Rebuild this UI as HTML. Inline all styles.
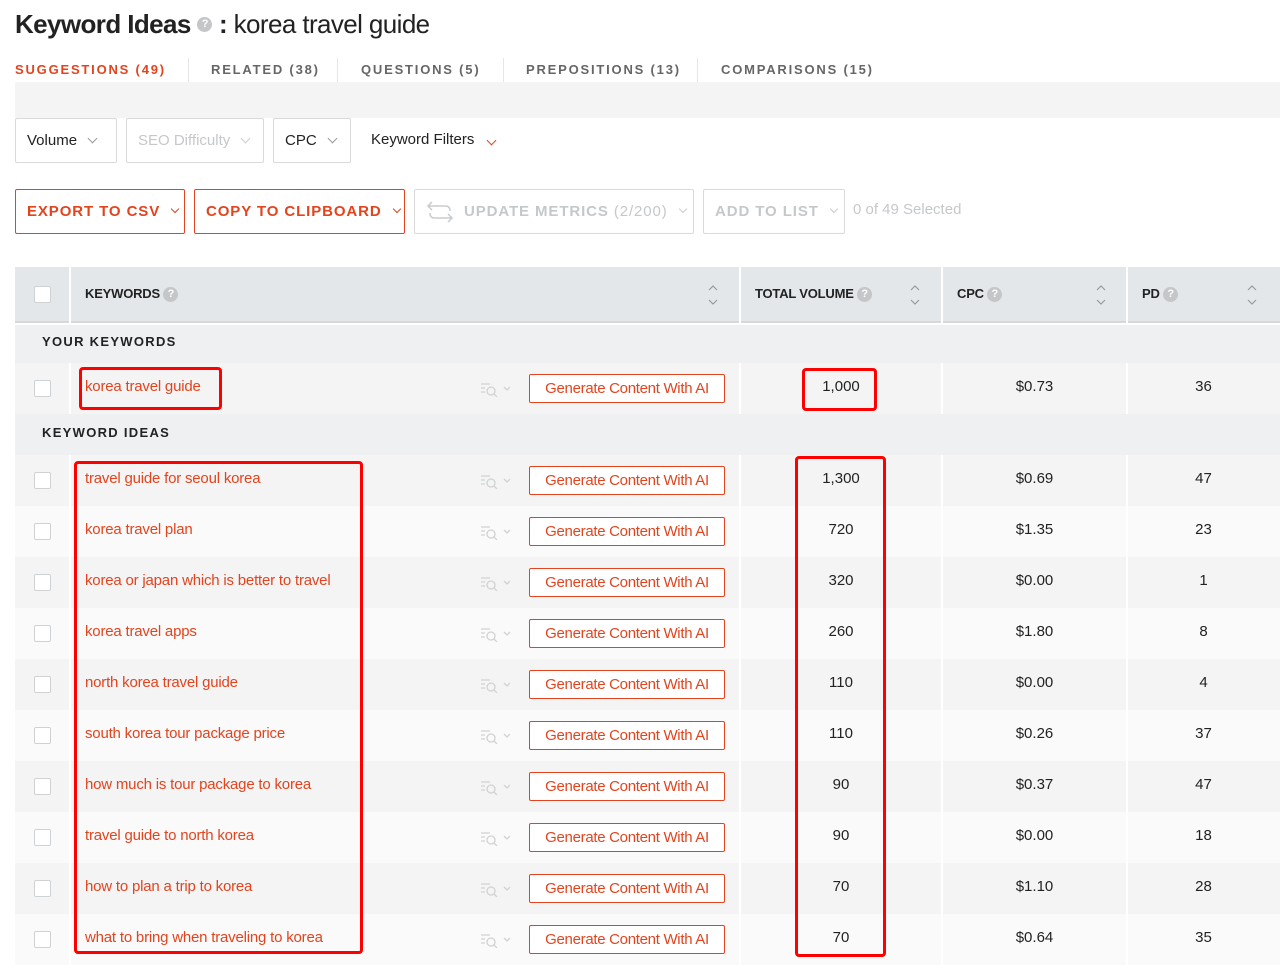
<!DOCTYPE html>
<html><head><meta charset="utf-8"><style>
*{box-sizing:border-box;margin:0;padding:0}
body{width:1280px;height:970px;background:#fff;font-family:"Liberation Sans",sans-serif;color:#222;position:relative;overflow:hidden}
.a{position:absolute}
h1{position:absolute;left:15px;top:9px;font-size:26px;font-weight:normal;letter-spacing:-0.6px}
h1 b{font-weight:bold}
.q{display:inline-block;width:15px;height:15px;border-radius:50%;background:#c4c6c8;color:#fff;font-size:11px;text-align:center;line-height:15px;vertical-align:middle;font-weight:bold}
.tab{position:absolute;top:62px;font-size:13px;font-weight:bold;letter-spacing:1.8px;color:#666;white-space:nowrap}
.sep{position:absolute;top:58px;width:1px;height:24px;background:#e6e6e6}
.box{position:absolute;border:1px solid #d8dadc;border-radius:2px;font-size:15px;display:flex;align-items:center;padding-left:11px;white-space:nowrap}
.chev{display:inline-block;width:7px;height:7px;border-right:1px solid #999;border-bottom:1px solid #999;transform:rotate(45deg);margin-left:12px;margin-top:-5px}
.btn{position:absolute;top:189px;height:45px;border-radius:2px;font-size:15px;font-weight:bold;letter-spacing:0.9px;display:flex;align-items:center;padding-left:11px;white-space:nowrap;overflow:hidden}
.o{border:1px solid #e2441e;color:#e2441e}
.g{border:1px solid #d8dadc;color:#c5c8cb}
.row{position:absolute;left:15px;width:1265px;height:51px}
.cb{position:absolute;left:19px;width:17px;height:17px;border:1px solid #cfd2d4;background:#fff;border-radius:2px}
.kw{position:absolute;left:70px;font-size:15px;color:#e2441e;letter-spacing:-0.2px}
.gen{position:absolute;left:514px;width:196px;height:29px;border:1px solid #e2441e;border-radius:2px;color:#e2441e;font-size:15px;text-align:center;line-height:27px;background:#fff;letter-spacing:-0.3px;white-space:nowrap}
.num{position:absolute;font-size:15px;text-align:center}
.ic{position:absolute;left:465px;width:34px;height:16px}
.vl{position:absolute;top:267px;width:2px;height:698px;background:#fff}
.red{position:absolute;border:3px solid #f00;border-radius:4px}
.th{position:absolute;top:286px;font-size:13px;font-weight:bold;letter-spacing:-0.2px}
.sort{position:absolute;top:283px;width:10px;height:24px}
.sec{position:absolute;left:15px;width:1265px;background:#eff0f1;z-index:2}
</style></head><body>
<h1><b>Keyword Ideas</b> <span class="q" style="margin-top:-4px">?</span> <b>:</b> korea travel guide</h1>

<div class="tab" style="left:15px;color:#e2441e">SUGGESTIONS (49)</div>
<div class="sep" style="left:188px"></div>
<div class="tab" style="left:211px">RELATED (38)</div>
<div class="sep" style="left:337px"></div>
<div class="tab" style="left:361px">QUESTIONS (5)</div>
<div class="sep" style="left:503px"></div>
<div class="tab" style="left:526px">PREPOSITIONS (13)</div>
<div class="sep" style="left:697px"></div>
<div class="tab" style="left:721px">COMPARISONS (15)</div>
<div class="a" style="left:15px;top:82px;width:1265px;height:36px;background:#f4f4f5"></div>

<div class="box" style="left:15px;top:118px;width:102px;height:45px">Volume<span class="chev"></span></div>
<div class="box" style="left:126px;top:118px;width:138px;height:45px;color:#c5c8cb">SEO Difficulty<span class="chev" style="border-color:#ccc"></span></div>
<div class="box" style="left:273px;top:118px;width:78px;height:45px">CPC<span class="chev"></span></div>
<div class="a" style="left:371px;top:131px;font-size:15px">Keyword Filters<span class="chev" style="border-color:#e2441e;margin-left:14px"></span></div>

<div class="btn o" style="left:15px;width:170px">EXPORT TO CSV<span class="chev" style="border-color:#e2441e;width:6px;height:6px"></span></div>
<div class="btn o" style="left:194px;width:211px">COPY TO CLIPBOARD<span class="chev" style="border-color:#e2441e;width:6px;height:6px"></span></div>
<div class="btn g" style="left:414px;width:280px"><svg width="28" height="26" viewBox="0 0 28 26" style="margin-right:10px;flex:none" fill="none" stroke="#c8cbce" stroke-width="1.5"><path d="M6 3L2 7l4 4M2 7h18a4 4 0 0 1 4 4v1M22 23l4-4-4-4M26 19H8a4 4 0 0 1-4-4v-1"/></svg>UPDATE METRICS<span style="font-weight:normal;margin-left:5px">(2/200)</span><span class="chev" style="border-color:#ccc;width:6px;height:6px"></span></div>
<div class="btn g" style="left:703px;width:142px">ADD TO LIST<span class="chev" style="border-color:#ccc;width:6px;height:6px"></span></div>
<div class="a" style="left:853px;top:201px;font-size:15px;color:#c5c8cb">0 of 49 Selected</div>

<div class="a" style="left:15px;top:267px;width:1265px;height:56px;background:#e4e7e9;border-bottom:2px solid #d6d9dc"></div>
<div class="cb" style="left:34px;top:286px"></div>
<div class="th" style="left:85px">KEYWORDS <span class="q">?</span></div>
<div class="th" style="left:755px">TOTAL VOLUME <span class="q">?</span></div>
<div class="th" style="left:957px">CPC <span class="q">?</span></div>
<div class="th" style="left:1142px">PD <span class="q">?</span></div>
<svg class="sort" style="left:708px" viewBox="0 0 10 24" fill="none" stroke="#999" stroke-width="1.2"><path d="M1 7l4-4 4 4M1 17l4 4 4-4"/></svg>
<svg class="sort" style="left:910px" viewBox="0 0 10 24" fill="none" stroke="#999" stroke-width="1.2"><path d="M1 7l4-4 4 4M1 17l4 4 4-4"/></svg>
<svg class="sort" style="left:1096px" viewBox="0 0 10 24" fill="none" stroke="#999" stroke-width="1.2"><path d="M1 7l4-4 4 4M1 17l4 4 4-4"/></svg>
<svg class="sort" style="left:1247px" viewBox="0 0 10 24" fill="none" stroke="#999" stroke-width="1.2"><path d="M1 7l4-4 4 4M1 17l4 4 4-4"/></svg>

<div id="rows"></div>
<script>
var d=[[363,"korea travel guide","1,000","$0.73","36"],
[455,"travel guide for seoul korea","1,300","$0.69","47"],
[506,"korea travel plan","720","$1.35","23"],
[557,"korea or japan which is better to travel","320","$0.00","1"],
[608,"korea travel apps","260","$1.80","8"],
[659,"north korea travel guide","110","$0.00","4"],
[710,"south korea tour package price","110","$0.26","37"],
[761,"how much is tour package to korea","90","$0.37","47"],
[812,"travel guide to north korea","90","$0.00","18"],
[863,"how to plan a trip to korea","70","$1.10","28"],
[914,"what to bring when traveling to korea","70","$0.64","35"]];
var h="";
d.forEach(function(r,i){
var bg=(i==0||i%2==1)?"#f4f4f5":"#fafafa";
h+='<div class="row" style="top:'+r[0]+'px;background:'+bg+'">'+
'<div class="cb" style="top:17px"></div>'+
'<div class="kw" style="top:15px">'+r[1]+'</div>'+
'<svg class="ic" style="top:18px" viewBox="0 0 34 16" fill="none" stroke="#cfd2d4" stroke-width="1.3"><path d="M1 3h9M1 7h4M1 11h4"/><circle cx="11" cy="10" r="4"/><path d="M14 13l3 3M24 6l3 3 3-3"/></svg>'+
'<div class="gen" style="top:11px">Generate Content With AI</div>'+
'<div class="num" style="left:725px;width:202px;top:15px">'+r[2]+'</div>'+
'<div class="num" style="left:927px;width:185px;top:15px">'+r[3]+'</div>'+
'<div class="num" style="left:1112px;width:153px;top:15px">'+r[4]+'</div></div>';
});
document.getElementById("rows").innerHTML=h;
</script>
<div class="vl" style="left:69px"></div>
<div class="vl" style="left:739px"></div>
<div class="vl" style="left:941px"></div>
<div class="vl" style="left:1126px"></div>

<div class="sec" style="top:325px;height:38px"><div class="a" style="left:27px;top:9px;font-size:13px;font-weight:bold;letter-spacing:1.3px">YOUR KEYWORDS</div></div>
<div class="sec" style="top:414px;height:41px"><div class="a" style="left:27px;top:11px;font-size:13px;font-weight:bold;letter-spacing:1.3px">KEYWORD IDEAS</div></div>

<div class="red" style="left:79px;top:367px;width:143px;height:43px;z-index:3"></div>
<div class="red" style="left:802px;top:368px;width:75px;height:43px;z-index:3"></div>
<div class="red" style="left:74px;top:461px;width:289px;height:493px;z-index:3"></div>
<div class="red" style="left:795px;top:456px;width:91px;height:501px;z-index:3"></div>
</body></html>
